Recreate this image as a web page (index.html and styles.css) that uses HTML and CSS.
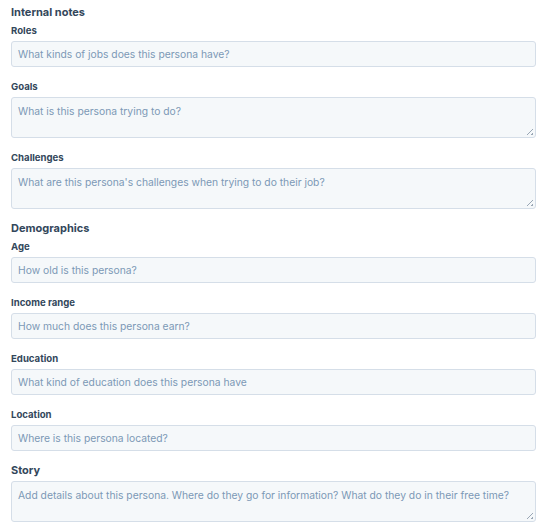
FILE: index.html
```html
<!DOCTYPE html>
<html>
<head>
<meta charset="utf-8">
<link rel="stylesheet" href="styles.css">
</head>
<body>
<div class="page">
  <h2 class="section">Internal notes</h2>
  <div class="field">
    <div class="label">Roles</div>
    <div class="box"><span class="ph">What kinds of jobs does this persona have?</span></div>
  </div>
  <div class="field">
    <div class="label">Goals</div>
    <div class="box area"><span class="ph">What is this persona trying to do?</span><span class="grip"></span></div>
  </div>
  <div class="field">
    <div class="label">Challenges</div>
    <div class="box area"><span class="ph">What are this persona's challenges when trying to do their job?</span><span class="grip"></span></div>
  </div>
  <h2 class="section">Demographics</h2>
  <div class="field">
    <div class="label">Age</div>
    <div class="box"><span class="ph">How old is this persona?</span></div>
  </div>
  <div class="field">
    <div class="label">Income range</div>
    <div class="box"><span class="ph">How much does this persona earn?</span></div>
  </div>
  <div class="field">
    <div class="label">Education</div>
    <div class="box"><span class="ph">What kind of education does this persona have</span></div>
  </div>
  <div class="field">
    <div class="label">Location</div>
    <div class="box"><span class="ph">Where is this persona located?</span></div>
  </div>
  <div class="field">
    <div class="label label-lg">Story</div>
    <div class="box area"><span class="ph">Add details about this persona. Where do they go for information? What do they do in their free time?</span><span class="grip"></span></div>
  </div>
</div>
</body>
</html>
```

FILE: styles.css
```css
html, body {
  margin: 0;
  padding: 0;
  background: #ffffff;
}
body {
  font-family: Inter, "Noto Sans", sans-serif;
  color: #33475b;
}
.page {
  padding: 5px 10px 0 11px;
  display: flex;
  flex-direction: column;
}
.section {
  margin: 0 0 4px 0;
  font-size: 11px;
  line-height: 14px;
  font-weight: 700;
  color: #33475b;
}
.field {
  display: flex;
  flex-direction: column;
  margin-bottom: 12px;
}
.field:last-child {
  margin-bottom: 0;
}
.label {
  font-size: 9.6px;
  line-height: 16px;
  font-weight: 700;
  margin-bottom: 2px;
  color: #33475b;
}
.label-lg {
  font-size: 11px;
  line-height: 14px;
  margin-bottom: 4px;
}
.box {
  position: relative;
  box-sizing: border-box;
  height: 26px;
  background: #f5f8fa;
  border: 1px solid #d5dee8;
  border-radius: 3px;
  padding: 0 6px;
  display: flex;
  align-items: center;
}
.box.area {
  height: 41px;
  align-items: flex-start;
  padding-top: 6px;
}
.ph {
  font-size: 10.3px;
  line-height: 14px;
  color: #7c98b6;
  white-space: nowrap;
}
.grip {
  position: absolute;
  right: 2px;
  bottom: 2px;
  width: 6px;
  height: 6px;
  background:
    linear-gradient(135deg, transparent 45%, #9aa7b5 45%, #9aa7b5 55%, transparent 55%),
    linear-gradient(135deg, transparent 80%, #9aa7b5 80%, #9aa7b5 92%, transparent 92%);
}
```
